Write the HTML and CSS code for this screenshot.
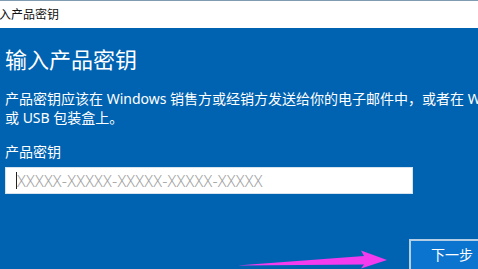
FILE: index.html
```html
<!DOCTYPE html>
<html lang="zh-CN">

<head>
    <meta charset="UTF-8">
    <meta name="viewport" content="width=device-width, initial-scale=1.0">
    <title>输入产品密钥</title>
    <link rel="stylesheet" href="styles.css">
</head>

<body>
    <div class="window">
        <div class="titlebar">
            <span class="title">输入产品密钥</span>
        </div>

        <div class="content">
            <h1 class="heading">输入产品密钥</h1>
            <p class="desc">产品密钥应该在 Windows 销售方或经销方发送给你的电子邮件中，或者在 Windows<br>或 USB 包装盒上。</p>

            <label class="label" for="key">产品密钥</label>
            <div class="field">
                <span class="caret"></span>
                <input type="text" id="key" placeholder="XXXXX-XXXXX-XXXXX-XXXXX-XXXXX">
            </div>

            <div class="footer">
                <button class="btn">下一步</button>
            </div>
        </div>

        <svg class="arrow" width="478" height="269" viewBox="0 0 478 269">
            <polygon points="237,265.5 364,256 361,250.5 387,260 361,268.5 364,264.5" fill="#f23cee" />
        </svg>
    </div>
</body>

</html>
```

FILE: styles.css
```css
* {
    margin: 0;
    padding: 0;
    box-sizing: border-box;
    font-family: "Noto Sans", "Noto Sans CJK SC", sans-serif;
}

html,
body {
    width: 478px;
    height: 269px;
    overflow: hidden;
    background-color: #0063b1;
}

.window {
    position: relative;
    width: 478px;
    height: 269px;
    overflow: hidden;
}

.titlebar {
    height: 28px;
    background-color: #fff;
    border-top: 1px solid #7f9cb0;
    display: flex;
    align-items: center;
}

.title {
    margin-left: -13px;
    font-size: 12px;
    color: #111;
    line-height: 16px;
}

.content {
    padding-left: 5px;
    color: #fff;
}

.heading {
    margin-top: 17px;
    font-size: 22px;
    font-weight: 400;
    line-height: 28px;
}

.desc {
    margin-top: 16px;
    font-size: 14px;
    line-height: 19px;
    white-space: nowrap;
}

.label {
    display: block;
    margin-top: 15px;
    font-size: 14px;
    line-height: 19px;
}

.field {
    position: relative;
    margin-top: 6px;
    width: 408px;
    height: 27px;
}

.field input {
    width: 100%;
    height: 100%;
    border: 1px solid #d6e2ee;
    background-color: #fff;
    padding-left: 11px;
    font-size: 16px;
    letter-spacing: 0.2px;
    outline: none;
}

.field input::placeholder {
    color: #a3a3a3;
    font-weight: 300;
}

.caret {
    position: absolute;
    left: 11px;
    top: 5px;
    width: 1px;
    height: 17px;
    background-color: #222;
}

.footer {
    display: flex;
    justify-content: flex-end;
    margin-top: 45px;
    margin-right: -17px;
}

.btn {
    border: 2px solid #b3cde6;
    background-color: #0a74cf;
    color: #fff;
    font-size: 14px;
    line-height: 20px;
    padding: 3px 20px 10px;
    font-family: "Noto Sans CJK SC", sans-serif;
}

.arrow {
    position: absolute;
    left: 0;
    top: 0;
    pointer-events: none;
}
```
